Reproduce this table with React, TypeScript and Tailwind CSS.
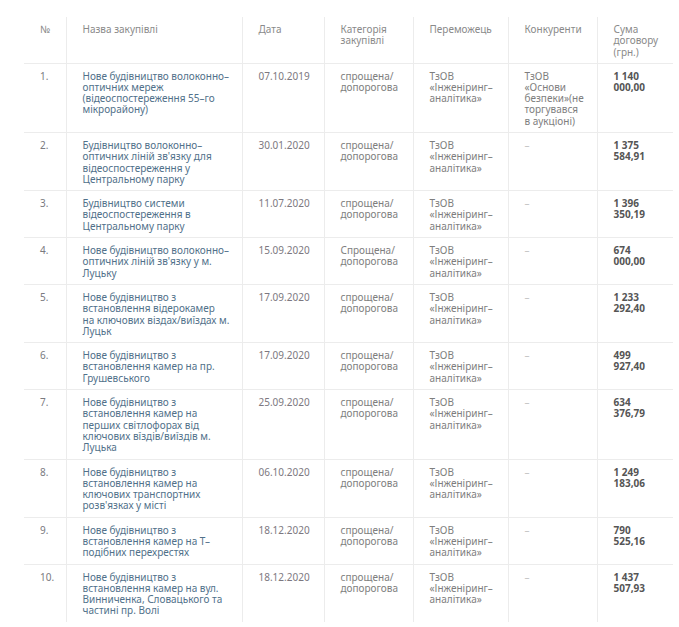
import React from "react";

type Row = {
  n: string;
  name: string[];
  date: string;
  cat: string[];
  win: string[];
  comp: string[];
  sum: string[];
};

const WIN = ["ТзОВ", "«Інженіринг–", "аналітика»"];
const CAT = ["спрощена/", "допорогова"];

const rows: Row[] = [
  {
    n: "1.",
    name: ["Нове будівництво волоконно–", "оптичних мереж", "(відеоспостереження 55–го", "мікрорайону)"],
    date: "07.10.2019",
    cat: CAT,
    win: WIN,
    comp: ["ТзОВ", "«Основи", "безпеки»(не", "торгувався", "в аукціоні)"],
    sum: ["1 140", "000,00"],
  },
  {
    n: "2.",
    name: ["Будівництво волоконно–", "оптичних ліній зв'язку для", "відеоспостереження у", "Центральному парку"],
    date: "30.01.2020",
    cat: CAT,
    win: WIN,
    comp: ["–"],
    sum: ["1 375", "584,91"],
  },
  {
    n: "3.",
    name: ["Будівництво системи", "відеоспостереження в", "Центральному парку"],
    date: "11.07.2020",
    cat: CAT,
    win: WIN,
    comp: ["–"],
    sum: ["1 396", "350,19"],
  },
  {
    n: "4.",
    name: ["Нове будівництво волоконно–", "оптичних ліній зв'язку у м.", "Луцьку"],
    date: "15.09.2020",
    cat: ["Спрощена/", "допорогова"],
    win: WIN,
    comp: ["–"],
    sum: ["674", "000,00"],
  },
  {
    n: "5.",
    name: ["Нове будівництво з", "встановлення відерокамер", "на ключових віздах/виїздах м.", "Луцьк"],
    date: "17.09.2020",
    cat: CAT,
    win: WIN,
    comp: ["–"],
    sum: ["1 233", "292,40"],
  },
  {
    n: "6.",
    name: ["Нове будівництво з", "встановлення камер на пр.", "Грушевського"],
    date: "17.09.2020",
    cat: CAT,
    win: WIN,
    comp: ["–"],
    sum: ["499", "927,40"],
  },
  {
    n: "7.",
    name: ["Нове будівництво з", "встановлення камер на", "перших світлофорах від", "ключових вїздів/виїздів м.", "Луцька"],
    date: "25.09.2020",
    cat: CAT,
    win: WIN,
    comp: ["–"],
    sum: ["634", "376,79"],
  },
  {
    n: "8.",
    name: ["Нове будівництво з", "встановлення камер на", "ключових транспортних", "розв'язках у місті"],
    date: "06.10.2020",
    cat: CAT,
    win: WIN,
    comp: ["–"],
    sum: ["1 249", "183,06"],
  },
  {
    n: "9.",
    name: ["Нове будівництво з", "встановлення камер на Т–", "подібних перехрестях"],
    date: "18.12.2020",
    cat: CAT,
    win: WIN,
    comp: ["–"],
    sum: ["790", "525,16"],
  },
  {
    n: "10.",
    name: ["Нове будівництво з", "встановлення камер на вул.", "Винниченка, Словацького та", "частині пр. Волі"],
    date: "18.12.2020",
    cat: CAT,
    win: WIN,
    comp: ["–"],
    sum: ["1 437", "507,93"],
  },
];

function Lines({ lines }: { lines: string[] }) {
  return (
    <>
      {lines.map((l, i) => (
        <div key={i} className="whitespace-nowrap">
          {l}
        </div>
      ))}
    </>
  );
}

const cellB = "border-l border-[#ececec] pl-4 pr-2 pt-[7px] pb-[5px] align-top";
const cellFirst = "pl-4 pr-2 pt-[7px] pb-[5px] align-top";

export default function App() {
  return (
    <div
      className="w-[679px] h-[627px] bg-white pt-[17px] pl-6"
      style={{ fontFamily: "'Noto Sans', 'Liberation Sans', sans-serif" }}
    >
      <table className="table-fixed border-collapse w-[649px] text-[10px] leading-[11.3px]">
        <colgroup>
          <col className="w-[42px]" />
          <col className="w-[176px]" />
          <col className="w-[82px]" />
          <col className="w-[89px]" />
          <col className="w-[95px]" />
          <col className="w-[89px]" />
          <col className="w-[76px]" />
        </colgroup>
        <thead>
          <tr className="h-[46px] text-[#8a8a8a]">
            <th className="pl-4 pt-[7px] pb-[5px] align-top text-left font-normal">№</th>
            <th className="border-l border-[#ececec] pl-4 pt-[7px] align-top text-left font-normal">Назва закупівлі</th>
            <th className="border-l border-[#ececec] pl-4 pt-[7px] align-top text-left font-normal">Дата</th>
            <th className="border-l border-[#ececec] pl-4 pt-[7px] align-top text-left font-normal">
              <Lines lines={["Категорія", "закупівлі"]} />
            </th>
            <th className="border-l border-[#ececec] pl-4 pt-[7px] align-top text-left font-normal">Переможець</th>
            <th className="border-l border-[#ececec] pl-4 pt-[7px] align-top text-left font-normal">Конкуренти</th>
            <th className="border-l border-[#ececec] pl-4 pt-[7px] align-top text-left font-normal">
              <Lines lines={["Сума", "договору", "(грн.)"]} />
            </th>
          </tr>
        </thead>
        <tbody>
          {rows.map((r, i) => (
            <tr key={i} className="border-t border-[#ececec]">
              <td className={cellFirst + " text-[#7a7a80]"}>{r.n}</td>
              <td className={cellB + " text-[#51718a]"}>
                <Lines lines={r.name} />
              </td>
              <td className={cellB + " text-[#7c7880]"}>{r.date}</td>
              <td className={cellB + " text-[#7e7e7e]"}>
                <Lines lines={r.cat} />
              </td>
              <td className={cellB + " text-[#7e7e7e]"}>
                <Lines lines={r.win} />
              </td>
              <td className={cellB + (r.comp.length > 1 ? " text-[#7e7e7e]" : " text-[#c4c4c4]")}>
                <Lines lines={r.comp} />
              </td>
              <td className={cellB + " text-[#555555] font-bold"}>
                <Lines lines={r.sum} />
              </td>
            </tr>
          ))}
        </tbody>
      </table>
    </div>
  );
}
